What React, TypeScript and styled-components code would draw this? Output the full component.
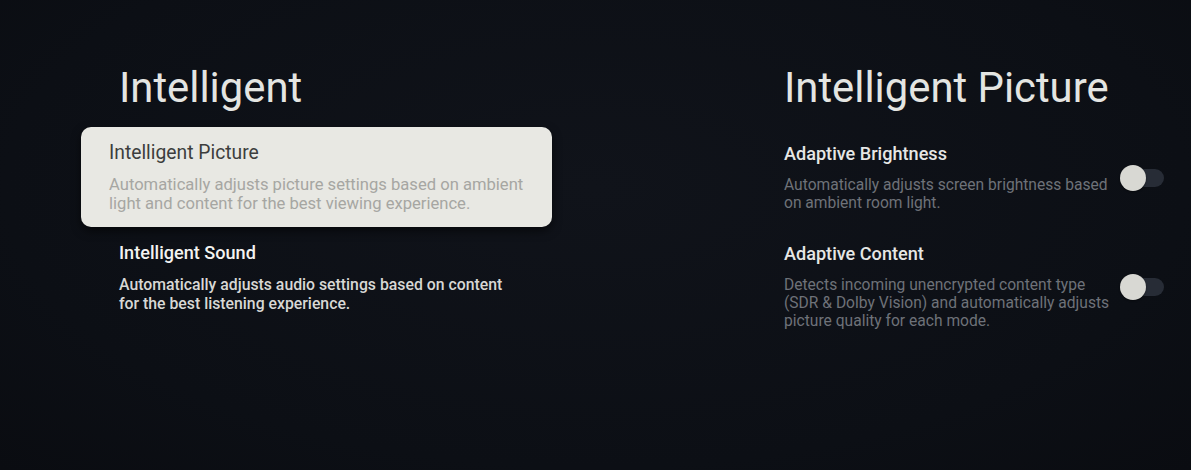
import React from 'react';
import styled, { createGlobalStyle } from 'styled-components';

const GlobalStyle = createGlobalStyle`
  html, body {
    margin: 0;
    padding: 0;
    background: #0d1016;
  }
  body {
    font-family: Roboto, "Noto Sans", sans-serif;
    -webkit-font-smoothing: antialiased;
  }
`;

const Screen = styled.div`
  width: 1191px;
  height: 470px;
  display: flex;
  align-items: flex-start;
  background: radial-gradient(ellipse at 50% 40%, #10131a 0%, #0c0f15 70%, #0a0c11 100%);
  overflow: hidden;
`;

const LeftPane = styled.div`
  margin-left: 81px;
  width: 471px;
  display: flex;
  flex-direction: column;
`;

const RightPane = styled.div`
  margin-left: 232px;
  width: 380px;
  display: flex;
  flex-direction: column;
`;

const PageTitle = styled.h1<{ $indent?: number }>`
  margin: 0;
  padding: 64px 0 0 ${p => p.$indent ?? 0}px;
  font-size: 41.8px;
  line-height: 48px;
  font-weight: 400;
  color: #e4e5e2;
  white-space: nowrap;
`;

const MenuList = styled.div`
  margin-top: 15px;
  display: flex;
  flex-direction: column;
`;

const MenuItem = styled.div<{ $focused?: boolean }>`
  display: flex;
  flex-direction: column;
  gap: 10px;
  border-radius: 10px;
  padding: ${p => (p.$focused ? '14px 20px 14px 28px' : '14px 20px 14px 38px')};
  background: ${p => (p.$focused ? '#e8e8e3' : 'transparent')};
  box-shadow: ${p => (p.$focused ? '0 4px 10px rgba(0,0,0,0.55)' : 'none')};
`;

const MenuTitle = styled.div<{ $focused?: boolean }>`
  font-size: ${p => (p.$focused ? '19.3px' : '18.1px')};
  line-height: 24px;
  font-weight: ${p => (p.$focused ? 400 : 500)};
  color: ${p => (p.$focused ? '#3d3e3d' : '#f3f3f1')};
`;

const MenuDesc = styled.div<{ $focused?: boolean }>`
  font-size: ${p => (p.$focused ? '16.6px' : '15.8px')};
  line-height: 19px;
  font-weight: ${p => (p.$focused ? 400 : 500)};
  color: ${p => (p.$focused ? '#a6a6a2' : '#d8d8d5')};
  max-width: ${p => (p.$focused ? '430px' : '395px')};
`;

const OptionList = styled.div`
  margin-top: 31px;
  display: flex;
  flex-direction: column;
  gap: 31px;
`;

const OptionRow = styled.div`
  display: flex;
  align-items: center;
`;

const OptionText = styled.div`
  width: 336px;
  display: flex;
  flex-direction: column;
  gap: 11px;
`;

const OptionTitle = styled.div`
  font-size: 18.1px;
  line-height: 22px;
  font-weight: 500;
  color: #e6e7e5;
`;

const OptionDesc = styled.div`
  font-size: 15.6px;
  line-height: 18px;
  font-weight: 400;
  color: #6e7279;
`;

const Switch = styled.div<{ $on?: boolean }>`
  position: relative;
  width: 44px;
  height: 18px;
  border-radius: 9px;
  background: ${p => (p.$on ? '#5b7fd6' : '#272c36')};
  flex-shrink: 0;

  &::after {
    content: '';
    position: absolute;
    top: -4px;
    left: ${p => (p.$on ? '18px' : '0')};
    width: 26px;
    height: 26px;
    border-radius: 50%;
    background: #d8d8d3;
    box-shadow: 0 1px 2px rgba(0,0,0,0.4);
  }
`;

const menu = [
  {
    title: 'Intelligent Picture',
    desc: 'Automatically adjusts picture settings based on ambient light and content for the best viewing experience.',
    focused: true,
  },
  {
    title: 'Intelligent Sound',
    desc: 'Automatically adjusts audio settings based on content for the best listening experience.',
    focused: false,
  },
];

const options = [
  {
    title: 'Adaptive Brightness',
    desc: 'Automatically adjusts screen brightness based on ambient room light.',
    on: false,
  },
  {
    title: 'Adaptive Content',
    desc: 'Detects incoming unencrypted content type (SDR & Dolby Vision) and automatically adjusts picture quality for each mode.',
    on: false,
  },
];

export default function App() {
  return (
    <>
      <GlobalStyle />
      <Screen>
        <LeftPane>
          <PageTitle $indent={38}>Intelligent</PageTitle>
          <MenuList>
            {menu.map(m => (
              <MenuItem key={m.title} $focused={m.focused}>
                <MenuTitle $focused={m.focused}>{m.title}</MenuTitle>
                <MenuDesc $focused={m.focused}>{m.desc}</MenuDesc>
              </MenuItem>
            ))}
          </MenuList>
        </LeftPane>
        <RightPane>
          <PageTitle>Intelligent Picture</PageTitle>
          <OptionList>
            {options.map(o => (
              <OptionRow key={o.title}>
                <OptionText>
                  <OptionTitle>{o.title}</OptionTitle>
                  <OptionDesc>{o.desc}</OptionDesc>
                </OptionText>
                <Switch $on={o.on} />
              </OptionRow>
            ))}
          </OptionList>
        </RightPane>
      </Screen>
    </>
  );
}
